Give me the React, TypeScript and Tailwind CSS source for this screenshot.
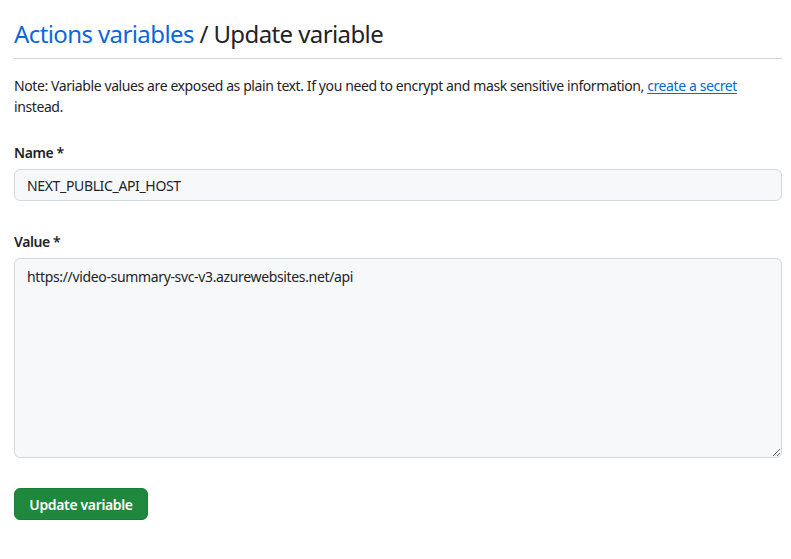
import { useState } from "react";

export default function App() {
  const [name, setName] = useState("NEXT_PUBLIC_API_HOST");
  const [value, setValue] = useState(
    "https://video-summary-svc-v3.azurewebsites.net/api"
  );

  return (
    <div className="min-h-screen bg-white pl-[14px] pr-[9px] pt-4 font-['Noto_Sans',sans-serif] tracking-[-0.025em] text-[#1f2328]">
      {/* Page header */}
      <div className="border-b border-[#d1d9e0] pb-1.5">
        <h2 className="text-[24px] leading-[36px] font-normal tracking-[-0.025em]">
          <a href="#" className="text-[#0969da] hover:underline">
            Actions variables
          </a>{" "}
          / Update variable
        </h2>
      </div>

      <p className="mt-4 max-w-[750px] text-[14px] leading-[21px]">
        Note: Variable values are exposed as plain text. If you need to encrypt and mask sensitive information,{" "}
        <a href="#" className="text-[#0969da] underline underline-offset-2">
          create a secret
        </a>{" "}
        instead.
      </p>

      <form className="mt-[25px]" onSubmit={(e) => e.preventDefault()}>
        <div>
          <label className="block text-[14px] leading-[21px] font-semibold mb-1.5">Name *</label>
          <input
            value={name}
            onChange={(e) => setName(e.target.value)}
            className="block w-full h-8 px-3 text-[14px] tracking-[-0.025em] bg-[#f6f8fa] border border-[#d1d9e0] rounded-md outline-none focus:bg-white focus:border-[#0969da]"
          />
        </div>

        <div className="mt-[30px]">
          <label className="block text-[14px] leading-[21px] font-semibold mb-1.5">Value *</label>
          <textarea
            value={value}
            onChange={(e) => setValue(e.target.value)}
            className="block w-full h-[200px] px-3 py-[7px] text-[14px] leading-[21px] tracking-[-0.025em] bg-[#f6f8fa] border border-[#d1d9e0] rounded-md outline-none resize-y focus:bg-white focus:border-[#0969da]"
          />
        </div>

        <button
          type="submit"
          className="mt-[30px] h-8 w-[134px] rounded-md bg-[#1f883d] text-white text-[14px] font-semibold tracking-[-0.025em] border border-[#1a7f37] hover:bg-[#1c8139]"
        >
          Update variable
        </button>
      </form>
    </div>
  );
}
